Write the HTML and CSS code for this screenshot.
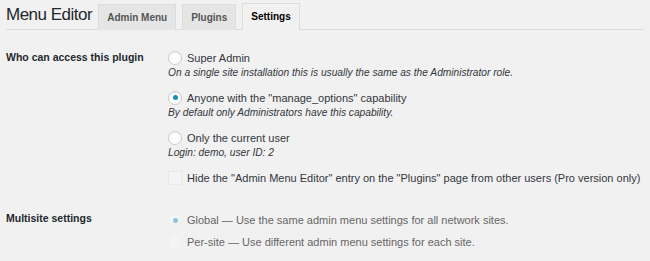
FILE: index.html
```html
<!DOCTYPE html>
<html lang="en">
<head>
  <meta charset="UTF-8" />
  <title>Menu Editor - Settings</title>
  <link rel="stylesheet" href="styles.css">
</head>
<body>
  <div class="wrap">
    <nav class="tabs">
      <h1 class="page-title">Menu Editor</h1>
      <a class="tab" href="#">Admin Menu</a>
      <a class="tab" href="#">Plugins</a>
      <a class="tab active" href="#">Settings</a>
    </nav>

    <table class="form-table">
      <tr>
        <th>Who can access this plugin</th>
        <td>
          <div class="option">
            <label class="choice"><span class="radio"></span>Super Admin</label>
            <p class="desc">On a single site installation this is usually the same as the Administrator role.</p>
          </div>
          <div class="option">
            <label class="choice"><span class="radio checked"></span>Anyone with the "manage_options" capability</label>
            <p class="desc">By default only Administrators have this capability.</p>
          </div>
          <div class="option">
            <label class="choice"><span class="radio"></span>Only the current user</label>
            <p class="desc">Login: demo, user ID: 2</p>
          </div>
          <div class="option">
            <label class="choice"><span class="checkbox"></span>Hide the "Admin Menu Editor" entry on the "Plugins" page from other users (Pro version only)</label>
          </div>
        </td>
      </tr>
      <tr class="multisite">
        <th>Multisite settings</th>
        <td>
          <label class="choice disabled"><span class="radio checked"></span>Global — Use the same admin menu settings for all network sites.</label>
          <label class="choice disabled"><span class="radio"></span>Per-site — Use different admin menu settings for each site.</label>
        </td>
      </tr>
    </table>
  </div>
</body>
</html>
```

FILE: styles.css
```css
body {
  margin: 0;
  padding: 0;
  background: #f1f1f1;
  color: #32373c;
  font-family: "Liberation Sans", Arial, sans-serif;
  font-size: 11px;
}
.wrap {
  padding: 0 6px;
}
.tabs {
  display: flex;
  align-items: flex-end;
  height: 29px;
  border-bottom: 1px solid #dcdcdc;
}
.page-title {
  margin: 0 0 0 0;
  font-size: 17px;
  font-weight: normal;
  letter-spacing: -0.5px;
  color: #23282d;
  line-height: 22px;
  align-self: center;
}
.tab {
  display: block;
  height: 25px;
  line-height: 26px;
  padding: 0 8px;
  margin-left: 6px;
  margin-bottom: -1px;
  background: #e5e5e5;
  border: 1px solid #dcdcdc;
  border-bottom: none;
  color: #555;
  font-size: 10px;
  font-weight: bold;
  text-decoration: none;
}
.tab.active {
  background: #f1f1f1;
  color: #000;
  height: 26px;
}
.form-table {
  border-collapse: collapse;
  margin-top: 19px;
}
.form-table th {
  width: 162px;
  padding: 0;
  text-align: left;
  vertical-align: top;
  font-size: 10.5px;
  line-height: 17px;
  color: #23282d;
}
.form-table td {
  padding: 0;
  vertical-align: top;
}
.option {
  margin-bottom: 10px;
}
.choice {
  display: flex;
  align-items: center;
  height: 17px;
  white-space: nowrap;
}
.desc {
  margin: 0;
  font-style: italic;
  font-size: 10.2px;
  line-height: 13px;
}
.radio,
.checkbox {
  flex: none;
  display: inline-flex;
  align-items: center;
  justify-content: center;
  width: 12px;
  height: 12px;
  margin-right: 5px;
  background: #fff;
  border: 1px solid #c8ccd0;
  box-shadow: inset 0 1px 2px rgba(0, 0, 0, 0.07);
  box-sizing: content-box;
}
.radio {
  border-radius: 50%;
}
.radio.checked::after {
  content: "";
  width: 5px;
  height: 5px;
  border-radius: 50%;
  background: #1e8cbe;
}
.checkbox {
  background: #f4f4f4;
  border-color: #e8e8e8;
  box-shadow: none;
}
.multisite th {
  padding-top: 14px;
}
.multisite td {
  padding-top: 13px;
}
.multisite .choice {
  height: 22px;
}
.choice.disabled {
  color: #666;
}
.choice.disabled .radio {
  background: #f4f4f4;
  border-color: #f0f0f0;
  box-shadow: none;
}
.choice.disabled .radio.checked::after {
  background: #8ec1e0;
}
```
